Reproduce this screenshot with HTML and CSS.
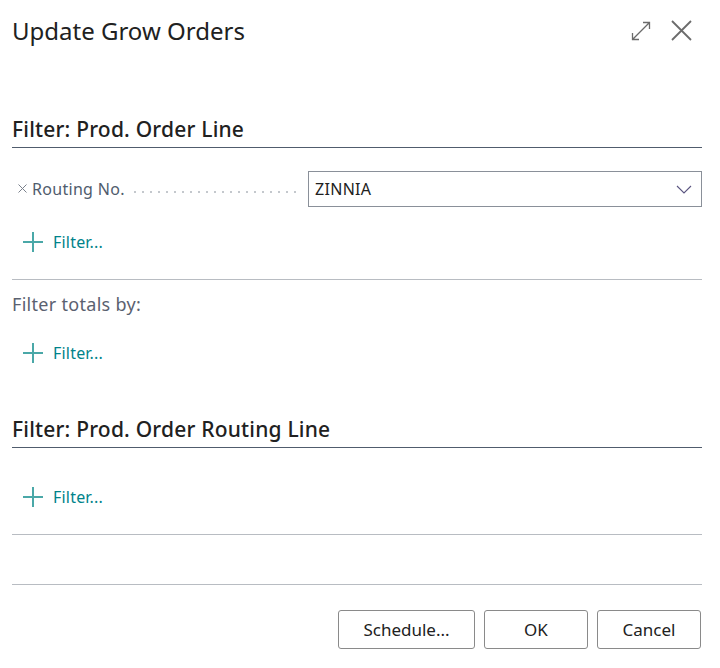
FILE: index.html
```html
<!DOCTYPE html>
<html>
<head>
<meta charset="utf-8">
<link rel="stylesheet" href="styles.css">
</head>
<body>
<div class="dialog">
  <div class="header">
    <h1 class="title">Update Grow Orders</h1>
    <div class="header-actions">
      <svg class="icon-expand" width="20" height="20" viewBox="0 0 20 20"><path d="M1.5 18.5 L18.5 1.5 M12 1.5 H18.5 V8 M1.5 12 V18.5 H8" fill="none" stroke="#6b6b6b" stroke-width="1.3"/></svg>
      <svg class="icon-close" width="21" height="21" viewBox="0 0 21 21"><path d="M1 1 L20 20 M20 1 L1 20" fill="none" stroke="#6b6b6b" stroke-width="1.8"/></svg>
    </div>
  </div>

  <h2 class="section-title first">Filter: Prod. Order Line</h2>
  <div class="field-row">
    <div class="field-label">
      <svg class="remove" width="9" height="9" viewBox="0 0 9 9"><path d="M0.5 0.5 L8.5 8.5 M8.5 0.5 L0.5 8.5" fill="none" stroke="#7a818c" stroke-width="1"/></svg>
      <span class="label-text">Routing No.</span><span class="leader"></span>
    </div>
    <div class="select"><span class="select-value">ZINNIA</span>
      <svg width="16" height="9" viewBox="0 0 16 9"><path d="M1 1 L8 8 L15 1" fill="none" stroke="#5b5580" stroke-width="1.1"/></svg>
    </div>
  </div>
  <div class="add-filter r1"><span class="plus"></span><span class="add-text">Filter...</span></div>
  <div class="sep s1"></div>
  <div class="totals">Filter totals by:</div>
  <div class="add-filter r2"><span class="plus"></span><span class="add-text">Filter...</span></div>

  <h2 class="section-title second">Filter: Prod. Order Routing Line</h2>
  <div class="add-filter r3"><span class="plus"></span><span class="add-text">Filter...</span></div>
  <div class="sep s2"></div>
  <div class="sep s3"></div>

  <div class="buttons">
    <button class="btn wide">Schedule...</button>
    <button class="btn">OK</button>
    <button class="btn">Cancel</button>
  </div>
</div>
</body>
</html>
```
FILE: styles.css
```css
html, body { margin: 0; padding: 0; background: #fff; }
body { font-family: "Noto Sans", "Open Sans", sans-serif; color: #212121; }
.dialog { width: 690px; padding: 0 18px 0 12px; }
.header { height: 62px; display: flex; align-items: center; justify-content: space-between; }
.title { margin: 0; font-size: 24px; font-weight: 400; line-height: 30px; letter-spacing: 0; color: #212121; }
.header-actions { display: flex; align-items: center; gap: 20px; margin-right: 10px; margin-top: -1px; }
.section-title { margin: 0; font-size: 21px; font-weight: 500; line-height: 27px; padding-bottom: 4px; border-bottom: 1px solid #505c6d; letter-spacing: 0.2px; color: #212121; }
.section-title.first { margin-top: 54px; }
.section-title.second { margin-top: 51px; }
.field-row { display: flex; align-items: center; margin-top: 23px; height: 36px; }
.field-label { width: 296px; display: flex; align-items: center; color: #505c6d; font-size: 16px; }
.remove { margin-left: 6px; margin-top: -1px; }
.label-text { margin-left: 5px; letter-spacing: 0.3px; }
.leader { flex: 1; height: 4px; margin-left: 6px; margin-right: 10px; margin-top: 5px; background-image: radial-gradient(circle, #c4c8cd 0.9px, transparent 1.3px); background-size: 8px 4px; background-position: 0 0; }
.select { flex: 1; height: 34px; border: 1px solid #8a9099; display: flex; align-items: center; justify-content: space-between; padding: 0 9px 0 6px; font-size: 16px; color: #212121; }
.select-value { letter-spacing: 0.3px; }
.add-filter { display: flex; align-items: center; height: 24px; color: #00838a; font-size: 16px; }
.add-filter.r1 { margin-top: 23px; }
.add-filter.r2 { margin-top: 26px; }
.add-filter.r3 { margin-top: 37px; }
.plus { position: relative; width: 20px; height: 20px; margin-left: 11px; margin-right: 10px; }
.plus::before, .plus::after { content: ""; position: absolute; background: #4aa8a8; }
.plus::before { left: 0; top: 9px; width: 20px; height: 2px; }
.plus::after { left: 9px; top: 0; width: 2px; height: 20px; }
.add-text { letter-spacing: 0.2px; }
.sep { height: 1px; background: #b8bcc2; }
.sep.s1 { margin-top: 25px; }
.sep.s2 { margin-top: 25px; }
.sep.s3 { margin-top: 49px; }
.totals { margin-top: 13px; line-height: 22px; font-size: 18px; color: #5a6170; letter-spacing: 0.3px; }
.buttons { display: flex; justify-content: flex-end; gap: 9px; margin-top: 25px; padding-right: 1px; }
.btn { height: 39px; width: 104px; background: #fff; border: 1px solid #8a8a8a; border-radius: 3px; font-family: "Noto Sans", "Open Sans", sans-serif; font-size: 17px; color: #212121; letter-spacing: 0; padding: 0; }
.btn.wide { width: 137px; }
```
